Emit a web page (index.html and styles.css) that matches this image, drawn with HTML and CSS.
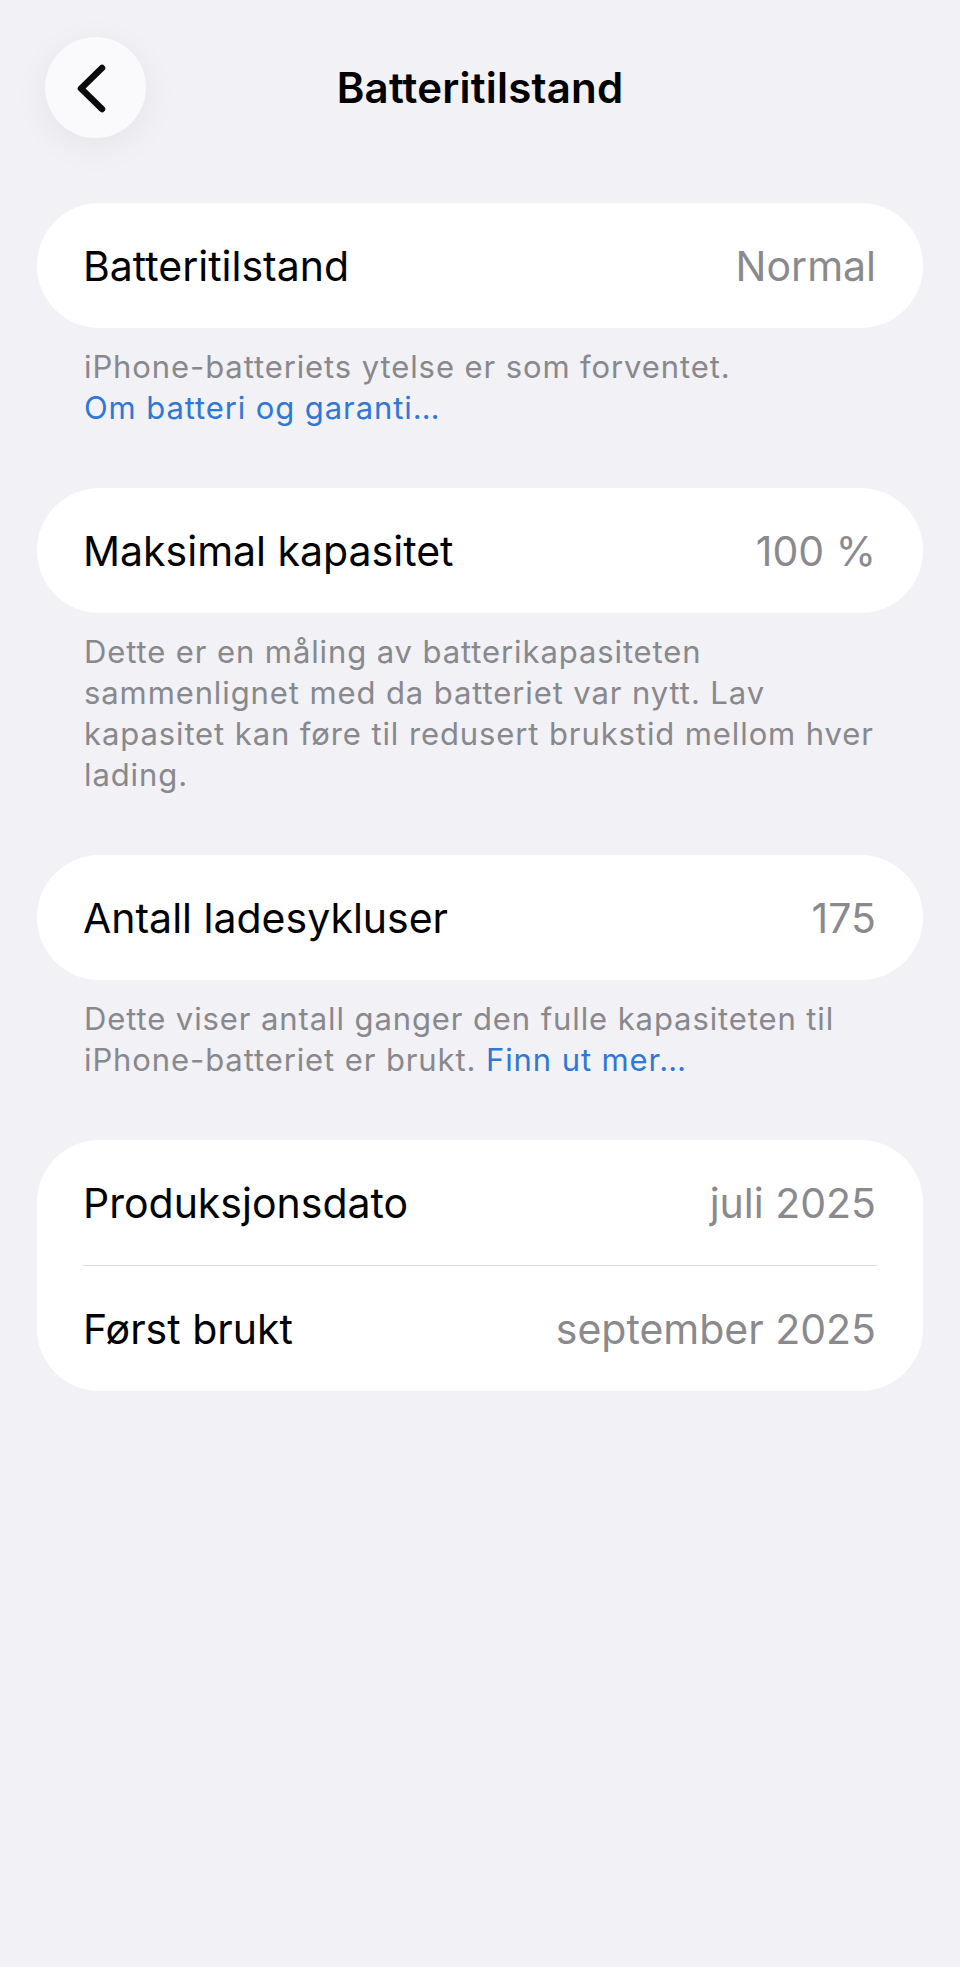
FILE: index.html
```html
<!DOCTYPE html>
<html lang="nb">
<head>
    <meta charset="UTF-8" />
    <meta name="viewport" content="width=device-width,initial-scale=1.0" />
    <title>Batteritilstand</title>
    <link rel="stylesheet" href="styles.css">
</head>
<body>

    <div class="header">
        <button class="back-btn" aria-label="Tilbake">
            <svg width="101" height="101" viewBox="0 0 101 101">
                <path d="M57 31 L36 51.5 L57 72" fill="none" stroke="#0a0a0a" stroke-width="6.5" stroke-linecap="round" stroke-linejoin="round"/>
            </svg>
        </button>
        <div class="title">Batteritilstand</div>
        <div></div>
    </div>

    <div class="content">
        <div class="section">
            <div class="card">
                <div class="row">
                    <span class="label">Batteritilstand</span>
                    <span class="value">Normal</span>
                </div>
            </div>
            <div class="footer">
                iPhone-batteriets ytelse er som forventet.<br>
                <a href="#">Om batteri og garanti…</a>
            </div>
        </div>

        <div class="section">
            <div class="card">
                <div class="row">
                    <span class="label">Maksimal kapasitet</span>
                    <span class="value">100 %</span>
                </div>
            </div>
            <div class="footer">
                Dette er en måling av batterikapasiteten<br>
                sammenlignet med da batteriet var nytt. Lav<br>
                kapasitet kan føre til redusert brukstid mellom hver<br>
                lading.
            </div>
        </div>

        <div class="section">
            <div class="card">
                <div class="row">
                    <span class="label">Antall ladesykluser</span>
                    <span class="value">175</span>
                </div>
            </div>
            <div class="footer">
                Dette viser antall ganger den fulle kapasiteten til<br>
                iPhone-batteriet er brukt. <a href="#">Finn ut mer…</a>
            </div>
        </div>

        <div class="section">
            <div class="card">
                <div class="row">
                    <span class="label">Produksjonsdato</span>
                    <span class="value">juli 2025</span>
                </div>
                <div class="sep"></div>
                <div class="row">
                    <span class="label">Først brukt</span>
                    <span class="value">september 2025</span>
                </div>
            </div>
        </div>
    </div>

</body>
</html>
```

FILE: styles.css
```css
body {
    margin: 0;
    padding: 0;
    background: #f1f1f6;
    font-family: Inter, "Noto Sans", sans-serif;
    color: #000;
    min-height: 1967px;
}

.header {
    display: grid;
    grid-template-columns: 1fr auto 1fr;
    align-items: center;
    padding: 37px 45px 0;
}

.back-btn {
    width: 101px;
    height: 101px;
    padding: 0;
    border: none;
    border-radius: 50%;
    background: #fafafc;
    box-shadow: 0 8px 36px rgba(0,0,0,0.06);
    cursor: pointer;
    display: flex;
}

.title {
    font-size: 42px;
    font-weight: 600;
    letter-spacing: 0.2px;
}

.content {
    padding: 65px 37px 0;
}

.section {
    margin-bottom: 60px;
}

.card {
    background: #fff;
    border-radius: 62px;
    overflow: hidden;
}

.row {
    display: flex;
    justify-content: space-between;
    align-items: center;
    height: 125px;
    padding: 0 47px 0 46px;
    font-size: 41px;
    letter-spacing: 0;
}

.row .value {
    color: #8a8a8e;
}

.sep {
    height: 1px;
    background: #dcdce0;
    margin: 0 46px 0 46px;
}

.footer {
    padding: 18px 10px 0 47px;
    font-size: 31px;
    line-height: 41px;
    color: #88888d;
    letter-spacing: 0.9px;
}

.footer a {
    color: #2f78d6;
    text-decoration: none;
}
```
